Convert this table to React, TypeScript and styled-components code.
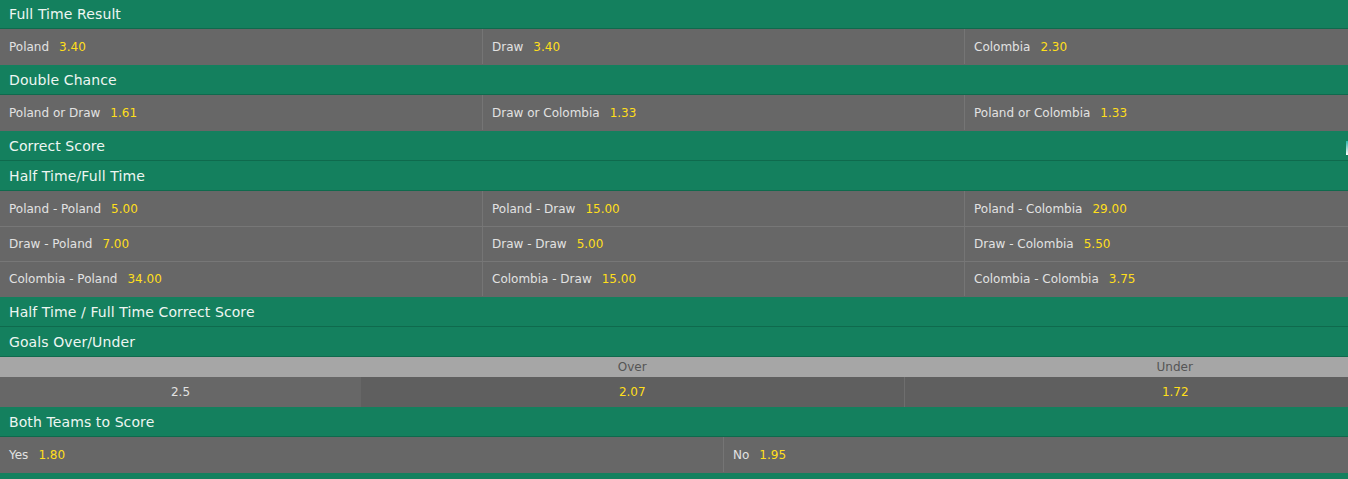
import React from "react";
import styled, { createGlobalStyle } from "styled-components";

const Global = createGlobalStyle`
  html, body { margin: 0; padding: 0; background: #14805e; overflow: hidden; }
  body { font-family: "DejaVu Sans", Verdana, sans-serif; }
`;

const Page = styled.div`
  width: 1446px;
  background: #14805e;
`;

const Header = styled.div<{ $first?: boolean }>`
  height: ${(p) => (p.$first ? 29 : 30)}px;
  box-sizing: border-box;
  border-bottom: 1px solid #0f6a4d;
  background: #14805e;
  color: #eef6f2;
  font-size: 14px;
  letter-spacing: 0.1px;
  line-height: ${(p) => (p.$first ? 28 : 30)}px;
  padding-left: 9px;
  position: relative;
  overflow: hidden;
`;

const RowGroup = styled.div`
  background: #676767;
  padding-bottom: 1px;
`;

const Row = styled.div<{ $cols: number }>`
  display: grid;
  grid-template-columns: repeat(${(p) => p.$cols}, 1fr);
  background: #676767;
  height: 35px;
  box-sizing: border-box;
  & + & {
    border-top: 1px solid #777777;
  }
`;

const Cell = styled.div`
  display: flex;
  align-items: center;
  padding-left: 9px;
  font-size: 12px;
  color: #e2e2e2;
  gap: 10px;
  & + & {
    border-left: 1px solid #757575;
  }
`;

const Odds = styled.span`
  color: #ffdf1b;
  font-size: 12px;
`;

const SubHeader = styled.div`
  display: grid;
  grid-template-columns: 361px 1fr 1fr;
  height: 20px;
  background: #a6a6a6;
  color: #555555;
  font-size: 12px;
  line-height: 20px;
  text-align: center;
`;

const LineRow = styled.div`
  display: grid;
  grid-template-columns: 361px 1fr 1fr;
  height: 30px;
  line-height: 30px;
  text-align: center;
  font-size: 12px;
`;

const LineCell = styled.div`
  background: #676767;
  color: #e2e2e2;
`;

const LineOdds = styled.div<{ $divider?: boolean }>`
  background: #5f5f5f;
  color: #ffdf1b;
  border-left: ${(p) => (p.$divider ? "1px solid #6e6e6e" : "none")};
`;

const Tail = styled.div`
  height: 10px;
  background: #14805e;
`;

const Mark = styled.span`
  position: absolute;
  left: 1346px;
  top: 10px;
  width: 2px;
  height: 14px;
  background: linear-gradient(#2fb5a8, #ffffff);
`;

type Sel = [string, string];

const Market: React.FC<{ title: string; rows?: Sel[][]; mark?: boolean; first?: boolean }> = ({
  title,
  rows,
  mark,
  first,
}) => (
  <>
    <Header $first={first}>
      {title}
      {mark && <Mark />}
    </Header>
    {rows && (
      <RowGroup>
        {rows.map((r, i) => (
          <Row key={i} $cols={r.length}>
            {r.map(([label, odds]) => (
              <Cell key={label}>
                <span>{label}</span>
                <Odds>{odds}</Odds>
              </Cell>
            ))}
          </Row>
        ))}
      </RowGroup>
    )}
  </>
);

export default function App() {
  return (
    <Page>
      <Global />
      <Market
        first
        title="Full Time Result"
        rows={[[["Poland", "3.40"], ["Draw", "3.40"], ["Colombia", "2.30"]]]}
      />
      <Market
        title="Double Chance"
        rows={[[["Poland or Draw", "1.61"], ["Draw or Colombia", "1.33"], ["Poland or Colombia", "1.33"]]]}
      />
      <Market title="Correct Score" mark />
      <Market
        title="Half Time/Full Time"
        rows={[
          [["Poland - Poland", "5.00"], ["Poland - Draw", "15.00"], ["Poland - Colombia", "29.00"]],
          [["Draw - Poland", "7.00"], ["Draw - Draw", "5.00"], ["Draw - Colombia", "5.50"]],
          [["Colombia - Poland", "34.00"], ["Colombia - Draw", "15.00"], ["Colombia - Colombia", "3.75"]],
        ]}
      />
      <Market title="Half Time / Full Time Correct Score" />
      <Market title="Goals Over/Under" />
      <SubHeader>
        <div />
        <div>Over</div>
        <div>Under</div>
      </SubHeader>
      <LineRow>
        <LineCell>2.5</LineCell>
        <LineOdds>2.07</LineOdds>
        <LineOdds $divider>1.72</LineOdds>
      </LineRow>
      <Market title="Both Teams to Score" rows={[[["Yes", "1.80"], ["No", "1.95"]]]} />
      <Tail />
    </Page>
  );
}
